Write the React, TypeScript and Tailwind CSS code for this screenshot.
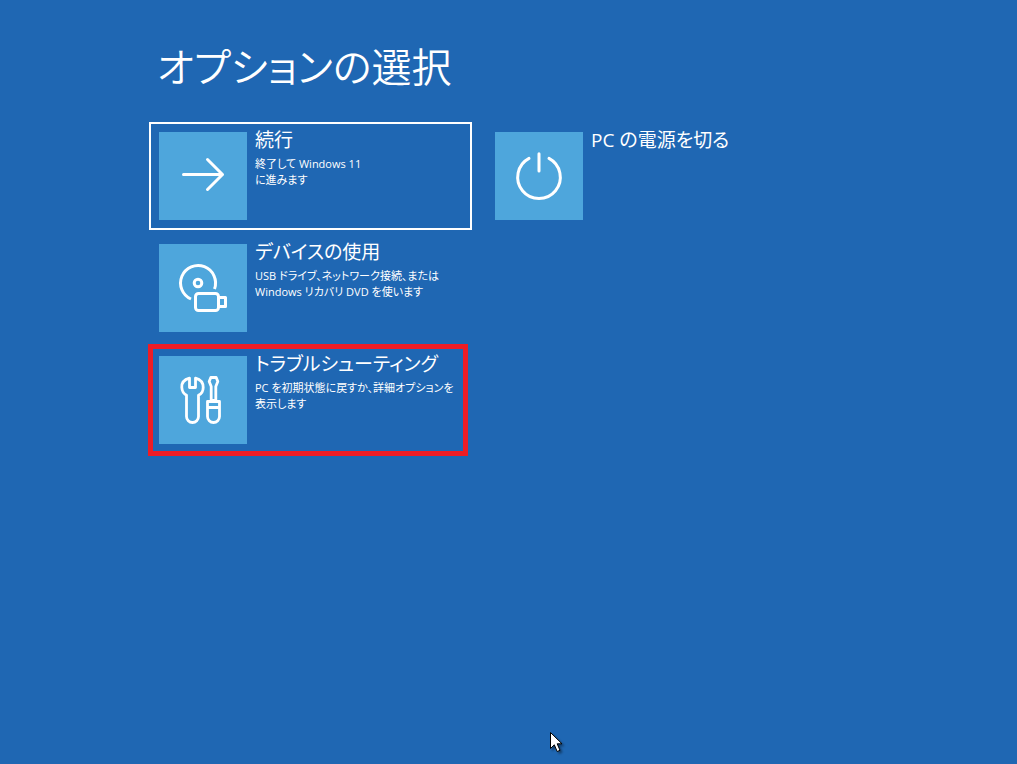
import { type ReactNode } from "react";

type OptionTileProps = {
    title: string,
    lines?: string[],
    icon: ReactNode,
    focused?: boolean,
    highlighted?: boolean
};

function ArrowIcon(){
    return(
        <svg className="size-22" viewBox="0 0 88 88" fill="none" stroke="white" strokeWidth="3" strokeLinecap="round" strokeLinejoin="round" aria-hidden="true">
            <path d="M24.5 42.5H63.5M48.5 27.5L63.5 42.5L48.5 57.5" />
        </svg>
    )
}

function DeviceIcon(){
    return(
        <svg className="size-22" viewBox="0 0 88 88" fill="none" stroke="white" strokeWidth="3" strokeLinejoin="round" aria-hidden="true">
            <path d="M55.5 45A17.5 17.5 0 1 0 32 55" />
            <circle cx="39" cy="39" r="3.8" />
            <rect x="36.5" y="49.5" width="23" height="17" rx="3" />
            <path d="M59.5 53.5H66.5V62.5H59.5" />
        </svg>
    )
}

function ToolsIcon(){
    return(
        <svg className="size-22" viewBox="0 0 88 88" fill="none" stroke="white" strokeWidth="2.8" strokeLinejoin="round" aria-hidden="true">
            <path d="M30.5 22.2C25.5 23.5 22.5 27 22.8 31.5C23 35.5 25 37.8 27.5 39.3V60.5A6 6 0 0 0 39.5 60.5V39.3C42.5 37.8 44.2 35.5 44.2 31.5C44.2 27 41.5 23.5 36.5 22.2V31.5H30.5Z" />
            <path d="M51.8 21.5H57.2L58.8 25.5L56.8 30.5V44.5H52.2V30.5L50.2 25.5Z" />
            <path d="M48.5 45.5H60.5V60.5A6 6 0 0 1 48.5 60.5ZM48.5 51.5H60.5" />
        </svg>
    )
}

function PowerIcon(){
    return(
        <svg className="size-22" viewBox="0 0 88 88" fill="none" stroke="white" strokeWidth="3" strokeLinecap="round" aria-hidden="true">
            <path d="M44 21.8V39M34 26.4A21.3 21.3 0 1 0 54 26.4" />
        </svg>
    )
}

function OptionTile({title, lines, icon, focused, highlighted}: OptionTileProps){
    return(
        <button
        type="button"
        className={`relative flex h-27 w-full gap-2 border-2 p-2 text-left ${focused ? "border-white" : "border-transparent"}`}
        >
            <span className="size-22 shrink-0 bg-[#4ea6dc]">{icon}</span>
            <span className="-mt-1 block whitespace-nowrap">
                <span className="mb-1 block text-[19px] leading-6">{title}</span>
                {lines?.map((line) => (
                    <span key={line} className="block text-[11px] leading-4">{line}</span>
                ))}
            </span>
            {
                highlighted &&
                <span className="absolute -top-1 right-0.5 -bottom-1 -left-[3px] border-5 border-[#ee1c25]" />
            }
        </button>
    )
}

export default function App(){
    return(
        <main className="min-h-screen bg-[#1f67b3] pt-[38px] pr-10 pb-10 pl-[149px] font-['Open_Sans','Noto_Sans_CJK_JP',sans-serif] text-white [font-feature-settings:'palt']">
            <h1 className="mb-[26px] pl-2 text-[40px] leading-[58px] font-[350]">オプションの選択</h1>
            <div className="grid grid-cols-[repeat(auto-fill,323px)] items-start gap-x-[13px]">
                <div className="flex flex-col gap-1">
                    <OptionTile title="続行" lines={["終了して Windows 11", "に進みます"]} icon={<ArrowIcon />} focused />
                    <OptionTile title="デバイスの使用" lines={["USB ドライブ、ネットワーク接続、または", "Windows リカバリ DVD を使います"]} icon={<DeviceIcon />} />
                    <OptionTile title="トラブルシューティング" lines={["PC を初期状態に戻すか、詳細オプションを", "表示します"]} icon={<ToolsIcon />} highlighted />
                </div>
                <OptionTile title="PC の電源を切る" icon={<PowerIcon />} />
            </div>
            <svg className="pointer-events-none fixed top-[732px] left-[550px] h-6 w-4 drop-shadow-[2px_2px_1px_rgba(0,0,0,0.4)]" viewBox="0 0 16 24" fill="white" stroke="black" aria-hidden="true">
                <path d="M0.5 0.5V16.5L4.3 12.8L7.2 19.5L10 18.3L7.2 11.8H12Z" />
            </svg>
        </main>
    )
}
